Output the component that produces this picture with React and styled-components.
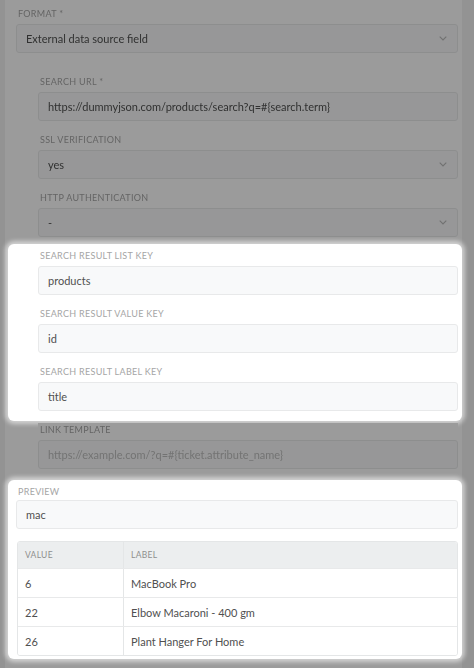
import React from 'react'
import styled, { createGlobalStyle, css } from 'styled-components'

const GlobalStyle = createGlobalStyle`
  html, body {
    margin: 0;
    padding: 0;
    background: #939393;
  }
  body {
    font-family: Lato, "Liberation Sans", sans-serif;
    -webkit-font-smoothing: antialiased;
  }
`

const Page = styled.div`
  margin-left: 5px;
  width: 457px;
  min-height: 668px;
  background: #9b9b9b;
  padding: 7px 4px 8px 11px;
  box-sizing: border-box;
  display: flex;
  flex-direction: column;
  gap: 12px;
`

const Dim = styled.div`
  background: #fff;
  filter: brightness(0.608);
`

const Field = styled.div`
  display: flex;
  flex-direction: column;
`

const Label = styled.div`
  font-size: 9px;
  line-height: 12px;
  letter-spacing: 0.3px;
  text-transform: uppercase;
  color: #a5a5a5;
  padding-left: 2px;
  padding-top: ${({ $low }) => ($low ? '3px' : '1px')};
  margin-bottom: ${({ $low }) => ($low ? '2px' : '4px')};
`

const Control = styled.div`
  height: 29px;
  box-sizing: border-box;
  display: flex;
  align-items: center;
  justify-content: space-between;
  padding: 0 10px 0 9px;
  background: #f8f9fa;
  border: 1px solid #e8e9ea;
  border-radius: 3px;
  font-size: 11px;
  color: ${({ $placeholder }) => ($placeholder ? '#bdbdbd' : '#505050')};
  white-space: nowrap;
`

const SubFields = styled.div`
  display: flex;
  flex-direction: column;
  gap: 12px;
  padding: 10px 0 0 22px;
`

const Spotlight = styled.div`
  position: relative;
  background: #fff;
  border-radius: 6px;
  box-shadow: 0 0 4px 3px rgba(255, 255, 255, 0.55);
  display: flex;
  flex-direction: column;
  gap: 12px;
  ${({ $nested }) =>
    $nested
      ? css`
          margin: -5px -4px -10px -30px;
          padding: 5px 4px 10px 30px;
        `
      : css`
          margin: -1px -4px -3px -8px;
          padding: 3px 4px 3px 8px;
        `}
`

const Table = styled.div`
  margin-left: 1px;
  border: 1px solid #e4e6e7;
  border-radius: 3px;
  overflow: hidden;
  font-size: 11px;
  color: #505050;
`

const Row = styled.div`
  display: grid;
  grid-template-columns: 105px 1fr;
  height: ${({ $head }) => ($head ? '26px' : '28px')};
  background: ${({ $head }) => ($head ? '#eceeef' : '#fff')};
  border-top: ${({ $first }) => ($first ? 'none' : '1px solid #e8e9ea')};
`

const Cell = styled.div`
  display: flex;
  align-items: center;
  padding: 0 7px;
  border-left: ${({ $split }) => ($split ? '1px solid #e4e6e7' : 'none')};
  ${({ $head }) =>
    $head &&
    css`
      font-size: 8.5px;
      letter-spacing: 0.3px;
      text-transform: uppercase;
      color: #8e8e8e;
    `}
`

const Chevron = () => (
  <svg width="8" height="5" viewBox="0 0 8 5" fill="none">
    <polyline points="0.7,0.7 4,4 7.3,0.7" stroke="#b9b9b9" strokeWidth="1.1" />
  </svg>
)

const Input = ({ label, value, select, placeholder }) => (
  <Field>
    <Label>{label}</Label>
    <Control $placeholder={placeholder}>
      <span>{value}</span>
      {select && <Chevron />}
    </Control>
  </Field>
)

const results = [
  ['6', 'MacBook Pro'],
  ['22', 'Elbow Macaroni - 400 gm'],
  ['26', 'Plant Hanger For Home'],
]

export default function App() {
  return (
    <>
      <GlobalStyle />
      <Page>
        <Dim>
          <Input label="Format *" value="External data source field" select />
        </Dim>
        <SubFields>
          <Dim>
            <Input label="Search URL *" value="https://dummyjson.com/products/search?q=#{search.term}" />
          </Dim>
          <Dim>
            <Input label="SSL Verification" value="yes" select />
          </Dim>
          <Dim>
            <Input label="HTTP Authentication" value="-" select />
          </Dim>
          <Spotlight $nested>
            <Input label="Search result list key" value="products" />
            <Input label="Search result value key" value="id" />
            <Input label="Search result label key" value="title" />
          </Spotlight>
          <Dim>
            <Input label="Link template" value="https://example.com/?q=#{ticket.attribute_name}" placeholder />
          </Dim>
        </SubFields>
        <Spotlight>
          <Field>
            <Label $low>Preview</Label>
            <Control>mac</Control>
          </Field>
          <Table>
            <Row $head $first>
              <Cell $head>Value</Cell>
              <Cell $head $split>Label</Cell>
            </Row>
            {results.map(([value, label]) => (
              <Row key={value}>
                <Cell>{value}</Cell>
                <Cell $split>{label}</Cell>
              </Row>
            ))}
          </Table>
        </Spotlight>
      </Page>
    </>
  )
}
